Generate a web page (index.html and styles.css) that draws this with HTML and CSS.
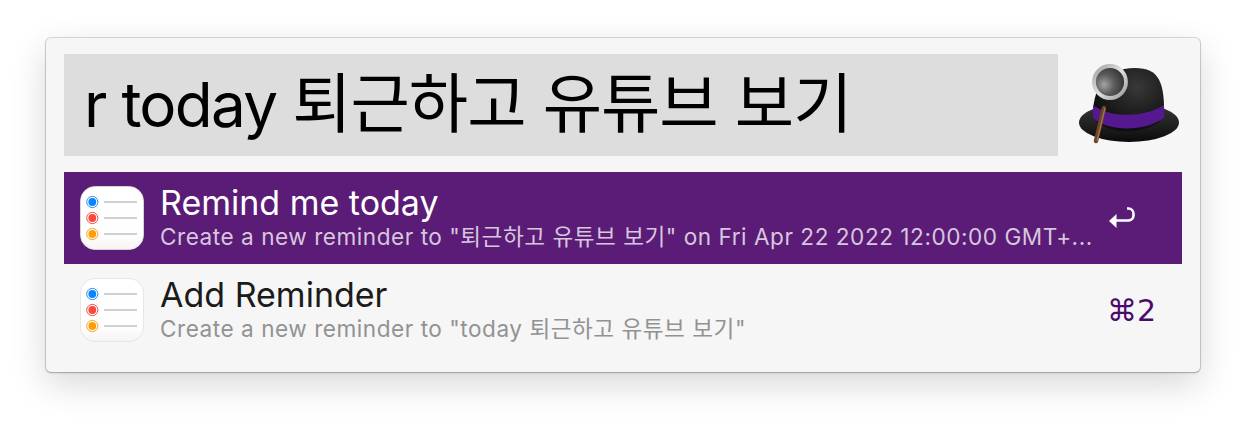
FILE: index.html
```html
<!DOCTYPE html>
<html lang="ko">
<head>
<meta charset="utf-8">
<title>Alfred</title>
<link rel="stylesheet" href="styles.css">
</head>
<body>
<svg class="defs" width="0" height="0" aria-hidden="true">
  <defs>
    <linearGradient id="tile" x1="0" y1="0" x2="0" y2="1"><stop offset="0" stop-color="#fff"/><stop offset=".75" stop-color="#fefefe"/><stop offset="1" stop-color="#f7f5f2"/></linearGradient>
    <radialGradient id="hatTop" cx=".62" cy=".3" r=".65"><stop offset="0" stop-color="#383838"/><stop offset=".6" stop-color="#1f1f1f"/><stop offset="1" stop-color="#0f0f0f"/></radialGradient>
    <linearGradient id="brim" x1="0" y1="0" x2="0" y2="1"><stop offset="0" stop-color="#383838"/><stop offset=".7" stop-color="#1a1a1a"/><stop offset="1" stop-color="#0a0a0a"/></linearGradient>
    <radialGradient id="lens" cx=".32" cy=".58" r=".75"><stop offset="0" stop-color="#a4a4a4"/><stop offset=".4" stop-color="#5e5e5e"/><stop offset="1" stop-color="#262626"/></radialGradient>
    <linearGradient id="ring" x1="0" y1="0" x2="1" y2="1"><stop offset="0" stop-color="#a0a0a0"/><stop offset=".5" stop-color="#e2e2e2"/><stop offset="1" stop-color="#9a9a9a"/></linearGradient>
    <symbol id="reminders" viewBox="0 0 64 64">
      <rect x=".5" y=".5" width="63" height="63" rx="14.500" fill="url(#tile)" stroke="#e4e1dc" stroke-width=".8"/>
      <path d="M24 16h33M24 32h33M24 48h33" fill="none" stroke="#d0d0d0" stroke-width="1.800"/>
      <circle cx="12.300" cy="16" r="5.600" fill="none" stroke="#2a90ee" stroke-width="1"/><circle cx="12.300" cy="16" r="3.900" fill="#0a84ff"/>
      <circle cx="12.300" cy="32" r="5.600" fill="none" stroke="#f0564c" stroke-width="1"/><circle cx="12.300" cy="32" r="3.900" fill="#f9483e"/>
      <circle cx="12.300" cy="48" r="5.600" fill="none" stroke="#f5a623" stroke-width="1"/><circle cx="12.300" cy="48" r="3.900" fill="#fe9f0a"/>
    </symbol>
  </defs>
</svg>
<main class="window">
  <div class="search">
    <div class="query">r today <span class="ko">퇴근하고 유튜브 보기</span></div>
    <svg class="hat" viewBox="0 0 110 90" aria-hidden="true">
      <ellipse cx="55" cy="62.500" rx="50" ry="19.500" fill="url(#brim)"/>
      <path d="M19 58C18 30 30 8 61 8C85 8 91 22 90 58C70 76 35 76 19 58Z" fill="url(#hatTop)"/>
      <path d="M19 45C35 58 70 58 90 45L90 58C70 72 35 72 19 58Z" fill="#55188f"/>
      <path d="M30 48L22 81" stroke="#6e4526" stroke-width="4.500" stroke-linecap="round"/>
      <path d="M31 48L23 81" stroke="#a8774a" stroke-width="1.200"/>
      <circle cx="36" cy="22" r="16" fill="url(#lens)" stroke="url(#ring)" stroke-width="3.800"/>
    </svg>
  </div>
  <ul class="results">
    <li class="row row-active">
      <svg class="app-icon"><use href="#reminders"/></svg>
      <div class="text">
        <div class="title">Remind me today</div>
        <div class="sub">Create a new reminder to "퇴근하고 유튜브 보기" on Fri Apr 22 2022 12:00:00 GMT+...</div>
      </div>
      <svg class="enter" viewBox="0 0 26 21" aria-hidden="true"><path d="M18 1.500h1.500a5.200 5.200 0 0 1 5 5.200v1.600a5.200 5.200 0 0 1-5 5.200H6" fill="none" stroke="#fff" stroke-width="2.600"/><path d="M0 14l7.500-7v14z" fill="#fff"/></svg>
    </li>
    <li class="row">
      <svg class="app-icon"><use href="#reminders"/></svg>
      <div class="text">
        <div class="title">Add Reminder</div>
        <div class="sub">Create a new reminder to "today 퇴근하고 유튜브 보기"</div>
      </div>
      <span class="shortcut">⌘2</span>
    </li>
  </ul>
</main>
</body>
</html>
```
FILE: styles.css
```css
* { box-sizing: border-box; }
html, body { margin: 0; height: 100%; background: #fff; overflow: hidden; }
body { padding: 38px 46px; font-family: Inter, "Noto Sans CJK KR", sans-serif; }
.defs { position: absolute; }
.window {
  width: 1154px;
  height: 334px;
  padding: 16px 18px;
  background: #f6f6f6;
  border-radius: 5px;
  box-shadow: 0 0 0 1px rgba(0,0,0,.14), 0 1px 2px rgba(0,0,0,.2), 0 12px 36px rgba(0,0,0,.16);
}
.search { display: flex; align-items: center; gap: 16px; height: 102px; margin-bottom: 16px; }
.query {
  flex: none;
  width: 994px;
  height: 102px;
  padding-left: 20px;
  background: #dddddd;
  color: #000;
  font-size: 62px;
  line-height: 101px;
  letter-spacing: -1.700px;
  white-space: nowrap;
}
.ko { font-size: 64.500px; letter-spacing: -1px; }
.hat { flex: none; width: 110px; height: 90px; }
.results { list-style: none; margin: 0; padding: 0; }
.row { display: flex; align-items: center; height: 92px; padding-left: 16px; color: #1b1b1b; }
.row-active { background: #5a1c76; color: #fff; }
.app-icon { width: 64px; height: 64px; flex: none; }
.text { width: 934px; margin-left: 16px; }
.title { font-size: 34px; line-height: 38px; white-space: nowrap; margin-top: -2px; }
.sub { font-size: 22.600px; line-height: 28px; letter-spacing: .52px; margin-top: 1px; color: #929292; white-space: nowrap; }
.row-active .sub { color: #d7c6de; }
.enter { width: 26px; height: 21px; margin: -2px 0 0 15px; }
.shortcut { font-family: "DejaVu Sans", sans-serif; font-size: 30px; color: #4b0a6e; margin-left: 13px; white-space: nowrap; }
```
